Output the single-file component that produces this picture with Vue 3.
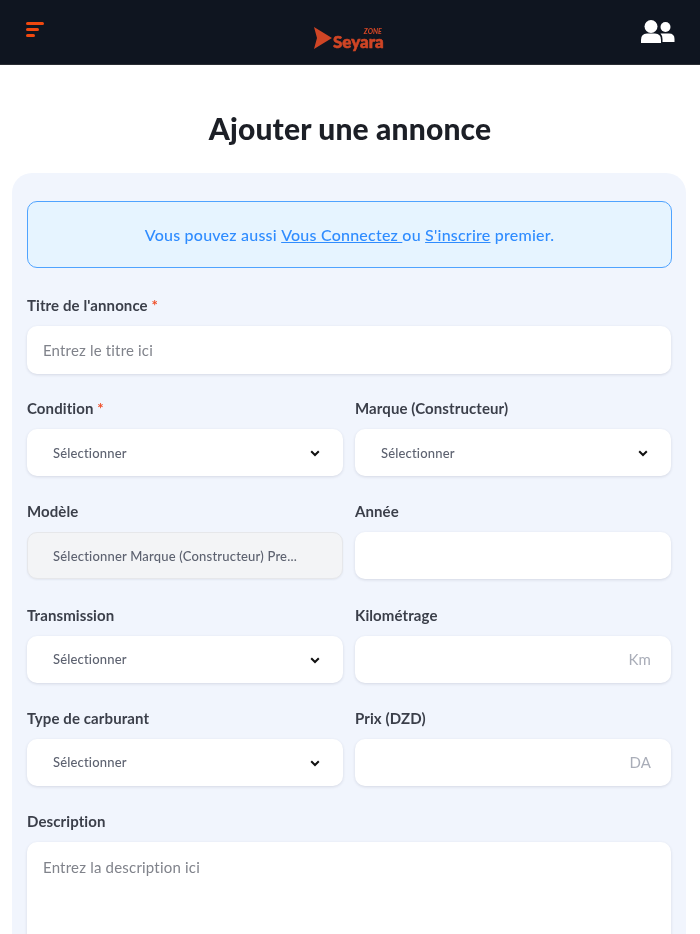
<script setup>
const rows = [
  [
    { label: 'Condition', required: true, type: 'select', value: 'Sélectionner' },
    { label: 'Marque (Constructeur)', type: 'select', value: 'Sélectionner' }
  ],
  [
    { label: 'Modèle', type: 'disabled', value: 'Sélectionner Marque (Constructeur) Pre...' },
    { label: 'Année', type: 'input' }
  ],
  [
    { label: 'Transmission', type: 'select', value: 'Sélectionner' },
    { label: 'Kilométrage', type: 'input', unit: 'Km' }
  ],
  [
    { label: 'Type de carburant', type: 'select', value: 'Sélectionner' },
    { label: 'Prix (DZD)', type: 'input', unit: 'DA' }
  ]
]
</script>

<template>
  <div class="page">
    <header class="topbar">
      <div class="burger"><i class="b1"></i><i class="b2"></i><i class="b3"></i></div>
      <div class="logo">
        <svg class="play" width="18" height="22" viewBox="0 0 18 22"><path d="M0 0 L18 11 L0 22 L3 11 Z" fill="#cf4525"/></svg>
        <div class="wordmark"><span class="zone">ZONE</span><span class="name">Seyara</span></div>
      </div>
      <svg class="users" width="34" height="24" viewBox="0 0 34 24">
        <circle cx="10" cy="6.5" r="6.5" fill="#fff"/>
        <path d="M0 23 V20 Q0 13.5 6 13.5 H14 Q20 13.5 20 20 V23 Z" fill="#fff"/>
        <circle cx="24.5" cy="7" r="5" fill="#fff"/>
        <path d="M21.5 22 V19 Q21.5 15.5 19.5 13.5 H28 Q33.5 13.5 33.5 19 V22 Z" fill="#fff"/>
      </svg>
    </header>

    <h1 class="title">Ajouter une annonce</h1>

    <main class="card">
      <div class="alert">Vous pouvez aussi <a>Vous Connectez </a>ou <a>S'inscrire</a> premier.</div>

      <div class="field first">
        <label>Titre de l'annonce <b>*</b></label>
        <div class="box text">Entrez le titre ici</div>
      </div>

      <div v-for="(row, i) in rows" :key="i" class="row">
        <div v-for="f in row" :key="f.label" class="field">
          <label>{{ f.label }} <b v-if="f.required">*</b></label>
          <div class="box" :class="f.type">
            <span v-if="f.value">{{ f.value }}</span>
            <svg v-if="f.type === 'select'" class="chev" width="10" height="7" viewBox="0 0 10 7"><path d="M1.2 1.2 L5 5 L8.8 1.2" fill="none" stroke="#111" stroke-width="2"/></svg>
            <span v-if="f.unit" class="unit">{{ f.unit }}</span>
          </div>
        </div>
      </div>

      <div class="field">
        <label>Description</label>
        <div class="box area">Entrez la description ici</div>
      </div>
    </main>
  </div>
</template>

<style>
html, body { margin: 0; background: #fff; }
</style>

<style scoped>
.page {
  width: 700px;
  height: 934px;
  overflow: hidden;
  background: #fff;
  font-family: "Lato", "Noto Sans", sans-serif;
  filter: blur(0.4px);
}
.topbar {
  height: 65px;
  box-sizing: border-box;
  background: #0f1520;
  border-bottom: 1px solid #2a2d33;
  display: flex;
  align-items: center;
  justify-content: space-between;
  padding: 0 26px;
  position: relative;
}
.burger { display: flex; flex-direction: column; gap: 3px; width: 20px; margin-bottom: 5px; }
.burger i { display: block; height: 3px; border-radius: 2px; background: #f0480f; }
.b1 { width: 18px; }
.b2 { width: 13px; }
.b3 { width: 9px; }
.logo {
  position: absolute;
  left: 314px;
  top: 27px;
  display: flex;
  align-items: flex-end;
}
.wordmark { display: flex; flex-direction: column; align-items: flex-end; margin-left: 1px; }
.zone { font-size: 7px; font-weight: 900; font-style: italic; line-height: 6px; color: #cf4525; margin-right: 2px; }
.name {
  font-size: 17px;
  font-weight: 900;
  line-height: 15px;
  color: #cf4525;
  -webkit-text-stroke: 0.6px #cf4525;
}
.users { margin-right: -1px; }
.title {
  margin: 45px 0 27px;
  text-align: center;
  font-size: 30px;
  line-height: 36px;
  font-weight: 900;
  letter-spacing: 0.15px;
  color: #1c1f26;
}
.card {
  margin: 0 14px 0 12px;
  padding: 28px 15px 0;
  background: #f1f5fd;
  border-radius: 20px 20px 0 0;
  height: 800px;
}
.alert {
  height: 67px;
  box-sizing: border-box;
  display: flex;
  align-items: center;
  justify-content: center;
  white-space: pre-wrap;
  background: #e6f4ff;
  border: 1px solid #4fa3ff;
  border-radius: 10px;
  color: #2f8cff;
  font-size: 16px;
  font-weight: 500;
  letter-spacing: 0.22px;
  margin: 0 -1px 27px 0;
}
.alert a { text-decoration: underline; color: #2f8cff; white-space: pre; }
.field { display: flex; flex-direction: column; min-width: 0; }
.first { margin-bottom: 24px; }
.first .box { height: 48px; }
.row {
  display: grid;
  grid-template-columns: 316px 316px;
  column-gap: 12px;
  margin-bottom: 25.34px;
}
label {
  font-size: 15px;
  line-height: 21px;
  font-weight: 700;
  letter-spacing: 0.1px;
  color: #3b3f4a;
  margin-bottom: 10px;
}
label b { color: #f0502a; font-weight: 700; }
.box {
  height: 47px;
  box-sizing: border-box;
  background: #fff;
  border-radius: 10px;
  box-shadow: 0 1px 3px rgba(40, 50, 80, 0.14);
  display: flex;
  align-items: center;
  position: relative;
  color: #5d6270;
  font-size: 13px;
  letter-spacing: 0.17px;
}
.box.text {
  padding-left: 16px;
  font-size: 15px;
  letter-spacing: 0.17px;
  color: #80838b;
  width: 644px;
}
.box.select, .box.disabled { padding-left: 26px; font-weight: 500; }
.box.disabled {
  background: #f3f4f6;
  border: 1px solid #e6e7ea;
  box-shadow: 0 1px 2px rgba(40, 50, 80, 0.07);
  padding-left: 25px;
  white-space: nowrap;
  letter-spacing: 0.2px;
}
.chev { position: absolute; right: 23px; top: 21px; }
.unit {
  position: absolute;
  right: 20px;
  font-size: 15px;
  color: #a9adb8;
}
.box.area {
  width: 644px;
  height: 200px;
  align-items: flex-start;
  padding: 16px;
  font-size: 15px;
  letter-spacing: 0.2px;
  color: #80838b;
}
</style>
